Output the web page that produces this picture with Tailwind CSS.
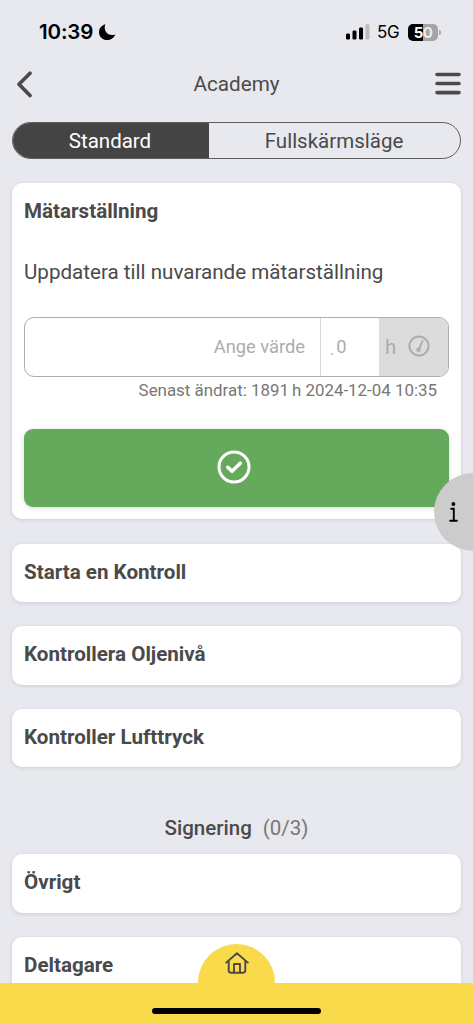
<!DOCTYPE html>
<html lang="sv">
<head>
<meta charset="utf-8">
<meta name="viewport" content="width=device-width, initial-scale=1">
<title>Academy</title>
<script src="https://cdn.jsdelivr.net/npm/@tailwindcss/browser@4"></script>
</head>
<body class="bg-[#e8e9ee] font-['Roboto',sans-serif] text-[#4a4a4a]">
<div class="relative flex h-[1024px] w-[473px] flex-col overflow-hidden">

  <!-- Status bar -->
  <header class="flex h-[64px] shrink-0 items-center justify-between pl-[39px] pr-[32px] font-['Inter',sans-serif] text-black">
    <div class="flex items-center gap-[6px]">
      <span class="text-[20.500px] leading-6 font-semibold tracking-[-0.150px]">10:39</span>
      <svg class="h-4 w-[17px]" viewBox="0 0 17 16"><path d="M6.300.2C2.600 1.300 0 4.400 0 8.200 0 12.600 3.600 16 8.100 16 11.700 16 15 13.800 16.300 10.400 9.500 12.800 3.800 7.200 6.300.2Z"/></svg>
    </div>
    <div class="flex items-center">
      <svg class="h-4 w-6" viewBox="0 0 24 16"><rect y="9.500" width="4" height="6" rx="1.200"/><rect x="6.500" y="6.500" width="4" height="9" rx="1.200"/><rect x="13" y="3.500" width="4" height="12" rx="1.200"/><rect x="19.500" y=".3" width="4" height="15.200" rx="1.200" fill="#bcbcc0"/></svg>
      <span class="ml-[7px] w-[24px] text-[17px] leading-6 tracking-[-0.4px]">5G</span>
      <div class="ml-[7px] flex h-[17px] w-[30px] items-center justify-center rounded-[5px] bg-linear-to-r from-black from-50% to-[#a5a5a8] to-50% text-[15px] leading-[17px] font-bold tracking-[-0.5px] text-white"><span>5</span><span class="text-[#ececf0]">0</span></div>
      <div class="ml-px h-[5px] w-[2px] rounded-r-full bg-[#a5a5a8]"></div>
    </div>
  </header>

  <nav class="flex h-[40px] shrink-0 items-center justify-between pl-[16px] pr-[12px]">
    <svg class="h-[27px] w-[26px]" viewBox="0 0 26 27" fill="none" stroke="#4a4a4a" stroke-width="3.700" stroke-linecap="round" stroke-linejoin="round"><path d="M14 2.200 3 13.200 14 24.500"/></svg>
    <h1 class="mr-[4px] text-[20.700px] leading-6">Academy</h1>
    <svg class="mt-[-1px] h-[24px] w-[26px]" viewBox="0 0 26 24" stroke="#4a4a4a" stroke-width="3.600" stroke-linecap="round"><path d="M2 2.500H24M2 11.500H24M2 20.600H24"/></svg>
  </nav>

  <main class="flex flex-col px-3 pt-[18px]">
    <div class="flex h-[37px] shrink-0 overflow-hidden rounded-full border border-[#5c5c5c] text-[20.500px] leading-[37px]">
      <div class="w-[196px] bg-[#444] pr-[2px] text-center text-white">Standard</div>
      <div class="flex-1 pr-[1px] text-center">Fullskärmsläge</div>
    </div>

    <section class="mt-6 h-[336px] shrink-0 rounded-[10px] bg-white px-3 pt-4 shadow-[0_1px_4px_rgba(0,0,0,0.12)]">
      <h2 class="text-[20.600px] leading-6 font-bold">Mätarställning</h2>
      <p class="mt-[37px] text-[20.600px] leading-6">Uppdatera till nuvarande mätarställning</p>
      <div class="mt-[33px] flex h-[60px] overflow-hidden rounded-[10px] border border-[#adadad] text-[18.300px] leading-[58px] text-[#adadad]">
        <div class="w-[296px] border-r border-[#d8d8d8] pr-[15px] text-right">Ange värde</div>
        <div class="w-[58px] pl-[9px]"><span class="relative top-[2px] text-[16px]">.</span><span class="ml-[2px]">0</span></div>
        <div class="flex flex-1 items-center bg-[#dcdcdc] pl-[6px]">
          <span class="text-[20.500px]">h</span>
          <svg class="mt-[-2px] ml-[12px] h-[22px] w-[22px]" viewBox="0 0 22 22" fill="none" stroke="#adadad" stroke-width="2"><circle cx="11" cy="11" r="9.600"/><path d="M14.400 6 11.200 14" stroke-linecap="round"/><circle cx="10.500" cy="14.700" r="2.200" fill="#adadad" stroke="none"/></svg>
        </div>
      </div>
      <p class="mt-[3px] pr-3 text-right text-[16.900px] leading-5 text-[#777]">Senast ändrat: 1891<span class="ml-[3px]">h</span> 2024-12-04 10:35</p>
      <button class="mt-[28.500px] flex h-[78.500px] w-full items-center justify-center rounded-[9px] bg-[#64a95c] pb-[2px] shadow-[0_1px_5px_rgba(0,0,0,0.15)]">
        <svg class="ml-[-5px] h-[34px] w-[34px]" viewBox="0 0 34 34" fill="none" stroke="white" stroke-linecap="round" stroke-linejoin="round"><circle cx="17" cy="17" r="15" stroke-width="3"/><path d="M10.800 17.300 15 21.300 23.300 13.200" stroke-width="3.600"/></svg>
      </button>
    </section>

    <div class="mt-[24.500px] flex flex-col gap-[24px] text-[20.600px] leading-6 font-bold">
      <section class="h-[58.500px] rounded-[10px] bg-white px-3 pt-4 shadow-[0_1px_4px_rgba(0,0,0,0.12)]">Starta en Kontroll</section>
      <section class="h-[58.500px] rounded-[10px] bg-white px-3 pt-4 shadow-[0_1px_4px_rgba(0,0,0,0.12)]">Kontrollera Oljenivå</section>
      <section class="h-[58.500px] rounded-[10px] bg-white px-3 pt-4 shadow-[0_1px_4px_rgba(0,0,0,0.12)]">Kontroller Lufttryck</section>
    </div>

    <h3 class="mt-[49px] flex justify-center gap-[11px] text-[20.500px] leading-6 font-medium"><span>Signering</span><span class="font-normal text-[#777]">(0/3)</span></h3>

    <div class="mt-[14px] flex flex-col gap-[24px] text-[20.600px] leading-6 font-bold">
      <section class="h-[58.500px] rounded-[10px] bg-white px-3 pt-4 shadow-[0_1px_4px_rgba(0,0,0,0.12)]">Övrigt</section>
      <section class="h-[58.500px] rounded-[10px] bg-white px-3 pt-4 shadow-[0_1px_4px_rgba(0,0,0,0.12)]">Deltagare</section>
    </div>
  </main>

  <!-- Floating info button -->
  <button class="absolute top-[473px] left-[434px] h-[78px] w-[78px] rounded-full bg-[#ccc]">
    <svg class="ml-[15px] h-[20px] w-[9px]" viewBox="0 0 9 20" fill="none" stroke="black" stroke-width="1.900" stroke-linecap="round" stroke-linejoin="round"><circle cx="4.400" cy="2" r="1.900" fill="black" stroke="none"/><path d="M2.200 6.700H4.800V18.700M1.200 18.700H7.900"/></svg>
  </button>

  <!-- Bottom bar with home tab -->
  <footer class="absolute inset-x-0 bottom-0 h-[41px] bg-[#f8da4b]">
    <div class="absolute top-[-39px] left-[198px] flex h-[39px] w-[77px] justify-center rounded-t-full bg-[#f8da4b] pt-2">
      <svg class="h-[22px] w-6" viewBox="0 0 24 22" fill="none" stroke="#4a4a44" stroke-width="1.900" stroke-linecap="round" stroke-linejoin="round"><path d="M1.200 10.600 12 1.200 22.800 10.600M3.700 9V18.600Q3.700 20.700 5.800 20.700H18.200Q20.300 20.700 20.300 18.600V9M9 20.500V12H15V20.500"/></svg>
    </div>
    <div class="mx-auto mt-[25px] h-[6px] w-[169px] rounded-full bg-black"></div>
  </footer>
</div>
</body>
</html>
